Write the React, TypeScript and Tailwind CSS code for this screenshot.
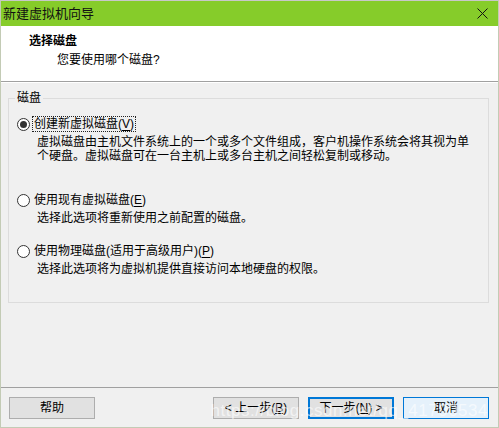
import React from 'react';

const font = "font-['Liberation_Sans','Noto_Sans_CJK_SC',sans-serif]";

const Radio = ({ checked }: { checked?: boolean }) => (
  <span className="relative flex h-[13px] w-[13px] shrink-0 items-center justify-center rounded-full border border-[#333333] bg-white">
    {checked && <span className="h-[7px] w-[7px] rounded-full bg-[#333333]" />}
  </span>
);

interface OptionProps {
  label: string;
  mnemonic: string;
  suffix?: string;
  lines: string[];
  checked?: boolean;
  focused?: boolean;
  className?: string;
}

const Option: React.FC<OptionProps> = ({ label, mnemonic, suffix, lines, checked, focused, className }) => (
  <div className={className}>
    <div className="flex h-[16px] items-center">
      <Radio checked={checked} />
      <span
        className={`ml-[2px] flex h-[16px] items-center px-[1px] leading-none ${
          focused ? 'border border-dotted border-[#222222]' : 'border border-transparent'
        }`}
      >
        {label}(<span className="underline underline-offset-2">{mnemonic}</span>){suffix}
      </span>
    </div>
    <div className="ml-[20px] mt-[3px] leading-[14px]">
      {lines.map((l) => (
        <div key={l}>{l}</div>
      ))}
    </div>
  </div>
);

const Button = ({ children, variant }: { children: React.ReactNode; variant?: 'default' | 'hover' }) => {
  const cls =
    variant === 'default'
      ? 'border-2 border-[#0078d7] bg-[#e1e1e1]'
      : variant === 'hover'
      ? 'border border-[#0078d7] bg-[#e5f1fb]'
      : 'border border-[#adadad] bg-[#e1e1e1]';
  return (
    <button className={`flex h-[22px] w-[86px] items-center justify-center text-[12px] text-black ${cls}`}>
      {children}
    </button>
  );
};

export default function App() {
  return (
    <div className={`relative flex h-[428px] w-[499px] flex-col overflow-hidden border border-t-[#c8c8c8] border-x-[#c3cbb5] border-b-[#c3cbb5] bg-[#f0f0f0] text-[12px] text-black ${font}`}>
      {/* Title bar */}
      <div className="flex h-[25px] shrink-0 items-center justify-between bg-[#86cc2a] pl-[2px] pr-[8px]">
        <span className="text-[13px] leading-none text-[#111111]">新建虚拟机向导</span>
        <svg width="11" height="11" viewBox="0 0 11 11" className="mr-[2px]">
          <path d="M0.5 0.5 L10.5 10.5 M10.5 0.5 L0.5 10.5" stroke="#111111" strokeWidth="1" />
        </svg>
      </div>

      {/* Header */}
      <div className="h-[56px] shrink-0 border-b border-[#a0a0a0] bg-white pl-[28px] pt-[8px]">
        <div className="text-[12px] font-bold leading-[14px]">选择磁盘</div>
        <div className="ml-[28px] mt-[5px] leading-[14px]">您要使用哪个磁盘?</div>
      </div>
      <div className="h-px shrink-0 bg-white" />

      {/* Body */}
      <div className="flex-1 pl-[7px] pr-[9px] pt-[15px]">
        <div className="relative h-[205px] border border-[#dcdcdc] px-[8px] pt-[17px]">
          <span className="absolute -top-[8px] left-[6px] bg-[#f0f0f0] px-[2px] leading-[14px]">磁盘</span>
          <Option
            label="创建新虚拟磁盘"
            mnemonic="V"
            checked
            focused
            lines={[
              '虚拟磁盘由主机文件系统上的一个或多个文件组成，客户机操作系统会将其视为单',
              '个硬盘。虚拟磁盘可在一台主机上或多台主机之间轻松复制或移动。',
            ]}
          />
          <Option
            className="mt-[29px]"
            label="使用现有虚拟磁盘"
            mnemonic="E"
            lines={['选择此选项将重新使用之前配置的磁盘。']}
          />
          <Option
            className="mt-[18px]"
            label="使用物理磁盘(适用于高级用户)"
            mnemonic="P"
            lines={['选择此选项将为虚拟机提供直接访问本地硬盘的权限。']}
          />
        </div>
      </div>

      {/* Footer */}
      <div className="h-[40px] shrink-0 border-t border-[#a0a0a0] px-[8px] pt-[9px]">
        <div className="flex items-center">
          <Button>帮助</Button>
          <div className="ml-auto flex gap-[9px] pr-[1px]">
            <Button>&lt; 上一步(<span className="underline">B</span>)</Button>
            <Button variant="default">
              下一步(<span className="underline">N</span>) &gt;
            </Button>
            <Button variant="hover">取消</Button>
          </div>
        </div>
      </div>

      {/* watermark */}
      <div className="pointer-events-none absolute bottom-[8px] right-[10px] font-['Liberation_Sans',sans-serif] text-[17px] leading-none tracking-[0.5px] text-white/60">
        https://blog.csdn.net/qq_41790534
      </div>
    </div>
  );
}
